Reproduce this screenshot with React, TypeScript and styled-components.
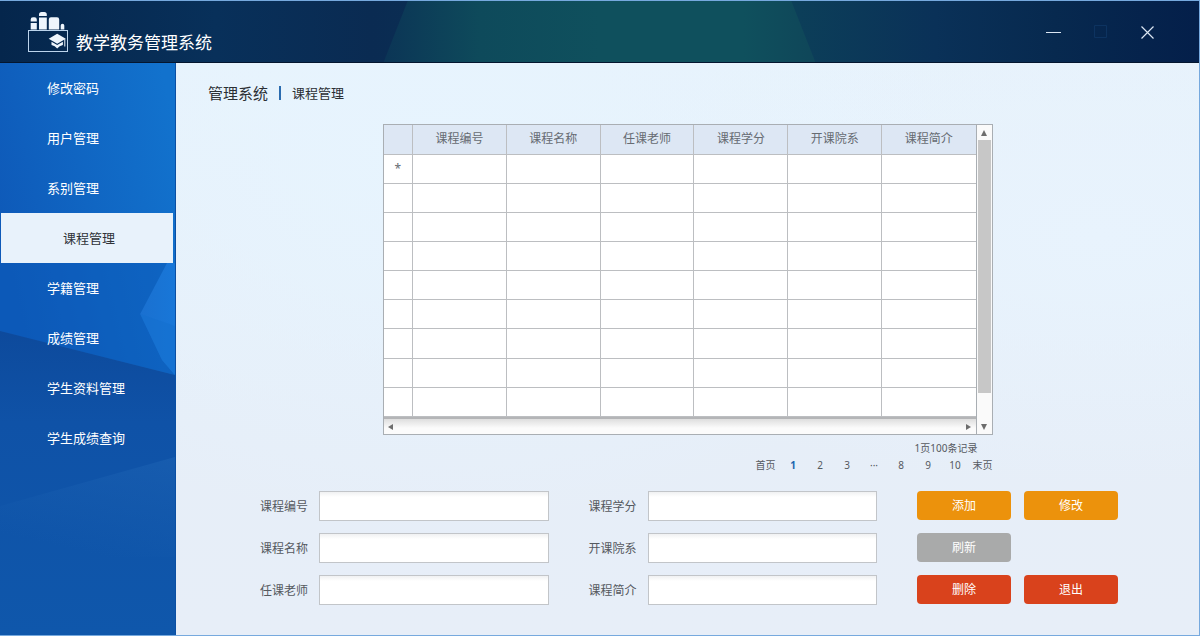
import React from "react";
import styled, { createGlobalStyle, css } from "styled-components";

const GlobalStyle = createGlobalStyle`
  *, *::before, *::after { box-sizing: border-box; }
  body {
    margin: 0;
    font-family: "Noto Sans", "Noto Sans CJK SC", sans-serif;
    color: #55595f;
  }
  button, input { font-family: inherit; }
`;

const Window = styled.div`
  display: flex;
  flex-direction: column;
  min-height: 100vh;
  border: 1px solid #76a9de;
  border-left: 0;
  background: #e6eef8;
`;

const Header = styled.header`
  position: relative;
  display: flex;
  justify-content: space-between;
  height: 62px;
  padding: 0 28px;
  border-bottom: 1px solid #04162f;
  background: linear-gradient(90deg, #05264c 0%, #08305a 18%, #0a2b52 31%, #0c3f59 66%, #0a3158 78%, #07294f 88%, #041f4a 100%);

  &::before {
    content: "";
    position: absolute;
    inset: 0;
    clip-path: polygon(34% 0, 66% 0, 68% 100%, 32% 100%);
    background: linear-gradient(90deg, #0b3556 32%, #0e4a5b 40%, #0f505d 50%, #0f505d 62%, #0f4659 68%);
  }
`;

const Brand = styled.div`
  position: relative;
  display: flex;
  align-items: flex-start;
  gap: 7px;
  padding-top: 11px;
`;

const Title = styled.h1`
  margin: 19px 0 0;
  font-size: 17px;
  line-height: 24px;
  font-weight: 400;
  color: #fff;
`;

const WindowControls = styled.div`
  position: relative;
  display: flex;
  align-items: center;
`;

const ControlButton = styled.button<{ $dim?: boolean }>`
  display: grid;
  place-items: center;
  width: 47px;
  height: 32px;
  padding: 0;
  border: 0;
  background: transparent;
  color: ${(p) => (p.$dim ? "#0d3360" : "#dbe6f3")};
`;

const Body = styled.div`
  display: flex;
  flex: 1;
`;

const Sidebar = styled.aside`
  position: relative;
  flex: 0 0 176px;
  background: #0f57ab;
  border-right: 1px solid #0b4fa3;
`;

const SidebarArt = styled.svg`
  position: absolute;
  inset: 0;
  width: 100%;
  height: 100%;
`;

const Nav = styled.nav`
  position: relative;
  display: flex;
  flex-direction: column;
`;

const NavLink = styled.a<{ $active?: boolean }>`
  padding: 0 0 0 47px;
  font-size: 13px;
  line-height: 50px;
  color: #fff;
  text-decoration: none;
  ${(p) =>
    p.$active &&
    css`
      margin: 0 2px 0 1px;
      padding-left: 62px;
      background: #e8f2fb;
      color: #2f3338;
    `}
`;

const Main = styled.main`
  display: flex;
  flex: 1;
  flex-direction: column;
  min-width: 0;
  padding: 20px 81px 28px;
  background:
    radial-gradient(ellipse at 25% 15%, #e7f4fe 0%, rgba(231, 244, 254, 0) 55%),
    radial-gradient(ellipse at 90% 30%, #e8f3fd 0%, rgba(232, 243, 253, 0) 45%),
    linear-gradient(180deg, #e7f2fb 0%, #e6eef8 60%, #e7eef8 100%);
`;

const Breadcrumb = styled.div`
  display: flex;
  align-items: center;
  gap: 11px;
  height: 20px;
  margin-left: -49px;
  color: #2b2f34;
`;

const Section = styled.span`
  font-size: 15px;
  line-height: 20px;
`;

const Divider = styled.span`
  width: 2px;
  height: 14px;
  background: #2b6cb0;
`;

const Page = styled.span`
  font-size: 13px;
  line-height: 20px;
`;

const TableBlock = styled.section`
  width: 100%;
  max-width: 610px;
  margin: 21px auto 0;
`;

const GridFrame = styled.div`
  display: grid;
  grid-template-columns: 1fr 16px;
  border: 1px solid #a9aeb3;
  background: #fff;
`;

const GridTable = styled.table`
  width: 100%;
  height: 292px;
  border-collapse: collapse;
  table-layout: fixed;
  font-size: 12px;
  line-height: 16px;
  color: #666b72;

  th, td {
    height: 29px;
    padding: 0;
    border-right: 1px solid #bcbec1;
    border-bottom: 1px solid #bcbec1;
    font-weight: 400;
    text-align: center;
  }
  thead th { background: #dde7f4; }
  thead th:first-child, tbody th { width: 29px; }
  tr > :last-child { border-right: 0; }
`;

const VerticalScroll = styled.div`
  display: flex;
  flex-direction: column;
  grid-row: 1 / 3;
  grid-column: 2;
  border-left: 1px solid #a9aeb3;
  background: #fafafa;
`;

const HorizontalScroll = styled.div`
  display: flex;
  justify-content: space-between;
  height: 17px;
  border-top: 2px solid #b4b5b7;
  background: linear-gradient(180deg, #dedede, #fbfbfb 60%);
`;

const ScrollButton = styled.button`
  display: grid;
  place-items: center;
  width: 15px;
  height: 15px;
  padding: 0;
  border: 0;
  background: transparent;
  color: #6d6d6d;
`;

const ScrollThumb = styled.div`
  flex: 1;
  margin: 0 1px 26px;
  background: #c7c7c7;
`;

const Records = styled.p`
  margin: 5px 15px 0 0;
  font-size: 10px;
  line-height: 16px;
  text-align: right;
`;

const Pager = styled.nav`
  display: flex;
  justify-content: flex-end;
  align-items: center;
  gap: 4px;
  height: 18px;
`;

const PageNumbers = styled.div`
  display: flex;
`;

const PageButton = styled.button<{ $edge?: boolean; $current?: boolean }>`
  width: ${(p) => (p.$edge ? "20px" : "27px")};
  padding: 0;
  border: 0;
  background: transparent;
  font-size: 10px;
  line-height: 18px;
  font-weight: ${(p) => (p.$current ? 700 : 400)};
  color: ${(p) => (p.$current ? "#1c63ad" : "#55595f")};
  text-align: center;
  white-space: nowrap;
`;

const PageGap = styled.span`
  width: 27px;
  font-size: 10px;
  line-height: 18px;
  text-align: center;
`;

const CourseForm = styled.form`
  display: grid;
  grid-template-columns: 1fr 1fr auto;
  gap: 40px;
  margin: 17px 0 0 3px;
`;

const Fields = styled.div`
  display: flex;
  flex-direction: column;
  gap: 12px;
`;

const Field = styled.div`
  display: flex;
  align-items: center;
`;

const Label = styled.label`
  flex: 0 0 59px;
  padding-top: 2px;
  font-size: 12px;
  line-height: 16px;
`;

const TextInput = styled.input`
  flex: 1;
  min-width: 0;
  height: 30px;
  padding: 0 8px;
  border: 1px solid #c2c5c9;
  border-radius: 0;
  background: linear-gradient(180deg, #f0f1f2, #fff 5px);
  font-size: 12px;
`;

const Actions = styled.div`
  display: grid;
  grid-template-columns: 94px 94px;
  grid-auto-rows: 30px;
  gap: 12px 13px;
`;

const tones = { add: "#ec920c", neutral: "#a9aaaa", danger: "#d9421c" };

const ActionButton = styled.button<{ $tone: keyof typeof tones; $newRow?: boolean }>`
  height: 29px;
  padding: 0;
  border: 0;
  border-radius: 4px;
  background: ${(p) => tones[p.$tone]};
  color: #fff;
  font-size: 12px;
  line-height: 28px;
  ${(p) => p.$newRow && "grid-column: 1;"}
`;

const Logo = () => (
  <svg width="41" height="41" viewBox="0 0 41 41" aria-hidden="true">
    <g fill="#eef5fc">
      <path d="M2.700 9.500V7.500q0-2.300 2.300-2.300h1.500q2.300 0 2.300 2.300v2zM2.700 11h6.100v6.500H2.700z" />
      <path d="M11 4V2.500Q11 0 13.500 0h2.800q2.500 0 2.500 2.500V4zM11 5.500h7.800v12H11z" />
      <path d="M20.800 7.500q0-2.200 2.200-2.200h6q2.200 0 2.200 2.200v10H20.800zM32.700 17.500v-4q0-1.800 1.800-1.800t1.800 1.800v4z" />
      <path d="M20.700 26.800l8.500-5 8.600 5-8.600 5z" />
      <path d="M23.500 29.800l5.700 3.200 5.700-3.200v3.200q-3.500.6-5.700 3.600-2.200-3-5.700-3.600zM36.300 27h1v7.500h-1z" />
    </g>
    <rect x="0.500" y="18.500" width="39" height="21" fill="none" stroke="#bcd4ec" strokeWidth="1" />
  </svg>
);

const arrows = {
  up: "M4 1l3 6H1z",
  down: "M1 1h6L4 7z",
  left: "M6 1v6L1 4z",
  right: "M2 1v6l5-3z",
};

const Arrow = ({ to }: { to: keyof typeof arrows }) => (
  <svg width="8" height="8" viewBox="0 0 8 8" aria-hidden="true">
    <path d={arrows[to]} fill="currentColor" />
  </svg>
);

const menu = ["修改密码", "用户管理", "系别管理", "课程管理", "学籍管理", "成绩管理", "学生资料管理", "学生成绩查询"];
const columns = ["课程编号", "课程名称", "任课老师", "课程学分", "开课院系", "课程简介"];
const rows = Array.from({ length: 9 }, (_, i) => i);

const FieldGroup = ({ names }: { names: string[] }) => (
  <Fields>
    {names.map((name) => (
      <Field key={name}>
        <Label htmlFor={name}>{name}</Label>
        <TextInput id={name} type="text" />
      </Field>
    ))}
  </Fields>
);

export default function App() {
  return (
    <Window>
      <GlobalStyle />
      <Header>
        <Brand>
          <Logo />
          <Title>教学教务管理系统</Title>
        </Brand>
        <WindowControls>
          <ControlButton aria-label="最小化">
            <svg width="15" height="15" viewBox="0 0 15 15"><path d="M0 8.500h15" stroke="currentColor" /></svg>
          </ControlButton>
          <ControlButton aria-label="最大化" $dim>
            <svg width="15" height="15" viewBox="0 0 15 15"><path d="M1.500 1.500h12v12h-12z" fill="none" stroke="currentColor" /></svg>
          </ControlButton>
          <ControlButton aria-label="关闭">
            <svg width="15" height="15" viewBox="0 0 15 15"><path d="M1.500 2.500l12 12M13.500 2.500l-12 12" stroke="currentColor" strokeWidth="1.200" /></svg>
          </ControlButton>
        </WindowControls>
      </Header>
      <Body>
        <Sidebar>
          <SidebarArt viewBox="0 0 176 572" preserveAspectRatio="none" aria-hidden="true">
            <defs>
              <linearGradient id="top" x1="0" y1="0.600" x2="1" y2="0.200">
                <stop offset="0" stopColor="#0e59b8" />
                <stop offset="1" stopColor="#1272cd" />
              </linearGradient>
              <linearGradient id="facet" x1="0" y1="0" x2="1" y2="0">
                <stop offset="0" stopColor="#1a70d0" />
                <stop offset="1" stopColor="#1877d8" />
              </linearGradient>
              <linearGradient id="low" x1="0" y1="0" x2="0" y2="1">
                <stop offset="0" stopColor="#0d4a9c" />
                <stop offset="0.300" stopColor="#0f52a7" />
                <stop offset="1" stopColor="#0f57ab" />
              </linearGradient>
              <linearGradient id="glow" x1="1" y1="0" x2="0.600" y2="1">
                <stop offset="0" stopColor="#1c62b3" />
                <stop offset="1" stopColor="#1c62b3" stopOpacity="0" />
              </linearGradient>
            </defs>
            <path d="M0 0h176v320H0z" fill="url(#top)" />
            <path d="M0 200h176v112L0 268z" fill="#0c58b8" fillOpacity="0.450" />
            <path d="M168 200h8v112l-13-15-22-46z" fill="url(#facet)" />
            <path d="M141 251l35 12v49l-13-15z" fill="#1470cf" fillOpacity="0.600" />
            <path d="M0 268l176 44v260H0z" fill="url(#low)" />
            <path d="M176 394v100H0v-51z" fill="url(#glow)" fillOpacity="0.600" />
          </SidebarArt>
          <Nav>
            {menu.map((item) => (
              <NavLink key={item} href="#" $active={item === "课程管理"}>{item}</NavLink>
            ))}
          </Nav>
        </Sidebar>
        <Main>
          <Breadcrumb>
            <Section>管理系统</Section>
            <Divider />
            <Page>课程管理</Page>
          </Breadcrumb>
          <TableBlock>
            <GridFrame>
              <GridTable>
                <thead>
                  <tr>
                    <th />
                    {columns.map((c) => <th key={c} scope="col">{c}</th>)}
                  </tr>
                </thead>
                <tbody>
                  {rows.map((r) => (
                    <tr key={r}>
                      <th scope="row">{r === 0 ? "*" : ""}</th>
                      {columns.map((c) => <td key={c} />)}
                    </tr>
                  ))}
                </tbody>
              </GridTable>
              <VerticalScroll>
                <ScrollButton aria-label="向上滚动"><Arrow to="up" /></ScrollButton>
                <ScrollThumb />
                <ScrollButton aria-label="向下滚动"><Arrow to="down" /></ScrollButton>
              </VerticalScroll>
              <HorizontalScroll>
                <ScrollButton aria-label="向左滚动"><Arrow to="left" /></ScrollButton>
                <ScrollButton aria-label="向右滚动"><Arrow to="right" /></ScrollButton>
              </HorizontalScroll>
            </GridFrame>
            <Records>1页100条记录</Records>
            <Pager aria-label="分页">
              <PageButton $edge>首页</PageButton>
              <PageNumbers>
                <PageButton $current>1</PageButton>
                <PageButton>2</PageButton>
                <PageButton>3</PageButton>
                <PageGap>···</PageGap>
                <PageButton>8</PageButton>
                <PageButton>9</PageButton>
                <PageButton>10</PageButton>
              </PageNumbers>
              <PageButton $edge>末页</PageButton>
            </Pager>
          </TableBlock>
          <CourseForm onSubmit={(e) => e.preventDefault()}>
            <FieldGroup names={["课程编号", "课程名称", "任课老师"]} />
            <FieldGroup names={["课程学分", "开课院系", "课程简介"]} />
            <Actions>
              <ActionButton type="button" $tone="add">添加</ActionButton>
              <ActionButton type="button" $tone="add">修改</ActionButton>
              <ActionButton type="button" $tone="neutral" $newRow>刷新</ActionButton>
              <ActionButton type="button" $tone="danger" $newRow>删除</ActionButton>
              <ActionButton type="button" $tone="danger">退出</ActionButton>
            </Actions>
          </CourseForm>
        </Main>
      </Body>
    </Window>
  );
}
